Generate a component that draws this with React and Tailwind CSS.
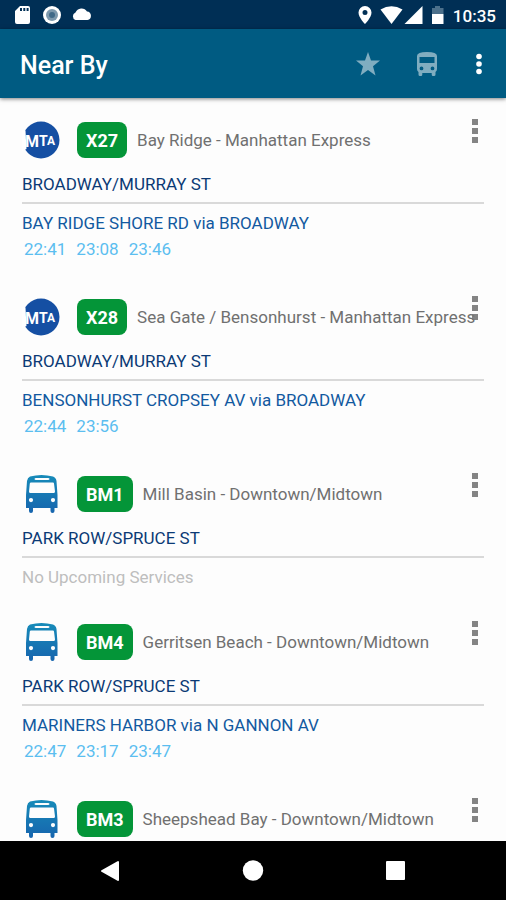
import React from "react";

const services = [
  { route: "X27", name: "Bay Ridge - Manhattan Express", stop: "BROADWAY/MURRAY ST", direction: "BAY RIDGE SHORE RD via BROADWAY", times: ["22:41", "23:08", "23:46"], logo: "mta" },
  { route: "X28", name: "Sea Gate / Bensonhurst - Manhattan Express", stop: "BROADWAY/MURRAY ST", direction: "BENSONHURST CROPSEY AV via BROADWAY", times: ["22:44", "23:56"], logo: "mta" },
  { route: "BM1", name: "Mill Basin - Downtown/Midtown", stop: "PARK ROW/SPRUCE ST", times: [], logo: "bus" },
  { route: "BM4", name: "Gerritsen Beach - Downtown/Midtown", stop: "PARK ROW/SPRUCE ST", direction: "MARINERS HARBOR via N GANNON AV", times: ["22:47", "23:17", "23:47"], logo: "bus" },
  { route: "BM3", name: "Sheepshead Bay - Downtown/Midtown", logo: "bus" },
];

function MtaLogo() {
  return (
    <svg width="40" height="40" viewBox="0 0 40 40" role="img" aria-label="MTA">
      <circle cx="19" cy="20" r="18.5" fill="#154fa3" />
      <path d="M0 10L3.500 10.500L4.500 29L0 31Z" fill="#fff" />
      <g fill="#fff" fontWeight="700" className="font-[Roboto,sans-serif]">
        <text x="3" y="27" fontSize="16">M</text>
        <text x="17" y="26" fontSize="14">T</text>
        <text x="25" y="25" fontSize="12">A</text>
      </g>
    </svg>
  );
}

function BusLogo() {
  return (
    <svg width="40" height="40" viewBox="0 0 40 40" aria-hidden="true">
      <defs>
        <linearGradient id="busPaint" x1="0" y1="0" x2="0" y2="1">
          <stop offset="0" stopColor="#178bb9" />
          <stop offset="1" stopColor="#1765ae" />
        </linearGradient>
      </defs>
      <path fill="url(#busPaint)" fillRule="evenodd" d="M8 2.500Q19.500 -.5 31 2.500Q34 3.500 34.500 7L35.500 21V34H32.500V37Q32.500 39 30.500 39T28.500 37V34H11V37Q11 39 9 39T7 37V34H4V21L5 7Q5.500 3.500 8 2.500ZM14 4Q12.500 4 12.500 5T14 6H26Q27.500 6 27.500 5T26 4ZM9 8.500Q8 8.500 7.800 9.500L7 17.500Q7 19 8.500 19H31.500Q33 19 33 17.500L32 9.500Q31.800 8.500 31 8.500ZM9 24A2.100 2.100 0 1 0 9 28.200A2.100 2.100 0 1 0 9 24ZM31 24A2.100 2.100 0 1 0 31 28.200A2.100 2.100 0 1 0 31 24Z" />
    </svg>
  );
}

function StatusBar() {
  return (
    <div className="flex h-[29px] shrink-0 items-center justify-between bg-[#002f55] pr-2.5 pl-3.5 text-white">
      <svg width="80" height="20" viewBox="0 0 80 20" aria-hidden="true">
        <path fill="#fff" fillRule="evenodd" d="M6 1H14Q16 1 16 3V17Q16 19 14 19H3Q1 19 1 17V6ZM6 3V6H8V3ZM9.300 3V6H11.300V3ZM12.600 3V6H14.600V3Z" />
        <circle cx="38" cy="10" r="9" fill="#fff" />
        <circle cx="38" cy="10" r="6" fill="#7d99ad" />
        <circle cx="38" cy="10" r="3" fill="#416a88" />
        <path fill="#fff" d="M61.500 15A4 4 0 0 1 61.500 7.500A6.500 6.500 0 0 1 73 6.500A4.300 4.300 0 0 1 73.500 15Z" />
      </svg>
      <div className="flex items-center gap-2">
        <svg width="88" height="20" viewBox="0 0 88 20" aria-hidden="true" fill="#fff">
          <path fillRule="evenodd" d="M8 1A6.500 6.500 0 0 0 1.500 7.500C1.500 12.500 8 19 8 19S14.500 12.500 14.500 7.500A6.500 6.500 0 0 0 8 1ZM8 5A2.500 2.500 0 1 1 8 10A2.500 2.500 0 1 1 8 5Z" />
          <path d="M23.500 4.500Q34.500 -2 45.500 4.500L34.500 19Z" />
          <path d="M65.500 1V19H47.500Z" />
          <path fill="#4c708b" d="M75 3H78V1H83V3H86.500V9H75Z" />
          <path d="M75 9H86.500V19H75Z" />
        </svg>
        <span className="pt-0.5 text-[17px] leading-6 font-medium">10:35</span>
      </div>
    </div>
  );
}

function AppBar() {
  return (
    <header className="z-10 flex h-[69px] shrink-0 items-center bg-[#005b82] pr-[15px] pl-5 text-white shadow-[0_1px_4px_rgba(0,0,0,0.5)]">
      <h1 className="flex-1 pt-1 text-[25px] leading-8 font-medium">Near By</h1>
      <button type="button" aria-label="Favourites" className="mr-8">
        <svg width="26" height="26" viewBox="0 0 26 26" fill="#80adc0"><path d="M13 1L16 9.500H25L18 15.300L20.500 24.500L13 19L5.500 24.500L8 15.300L1 9.500H10Z" /></svg>
      </button>
      <button type="button" aria-label="Nearby buses" className="mr-[26px]">
        <svg width="28" height="26" viewBox="0 0 28 26" fill="#80adc0">
          <path fillRule="evenodd" d="M4 5Q4 1 14 1T24 5V18Q24 20 22.500 21V23.500Q22.500 25 21 25H20Q18.700 25 18.700 23.500V22H9.300V23.500Q9.300 25 8 25H7Q5.500 25 5.500 23.500V21Q4 20 4 18ZM6.500 6V12H21.500V6ZM8.500 15.500A1.900 1.900 0 1 0 8.500 19.300A1.900 1.900 0 1 0 8.500 15.500ZM19.500 15.500A1.900 1.900 0 1 0 19.500 19.300A1.900 1.900 0 1 0 19.500 15.500Z" />
        </svg>
      </button>
      <button type="button" aria-label="More options" className="flex w-6 justify-center">
        <svg width="8" height="24" viewBox="0 0 8 24" fill="#fff"><circle cx="4" cy="4.500" r="2.800" /><circle cx="4" cy="12" r="2.800" /><circle cx="4" cy="19.500" r="2.800" /></svg>
      </button>
    </header>
  );
}

function Service({ item }) {
  return (
    <li className="relative mb-[34px]">
      <div className="flex h-9 items-center">
        <span className="w-[55px] shrink-0">{item.logo === "mta" ? <MtaLogo /> : <BusLogo />}</span>
        <span className="flex h-9 shrink-0 items-center rounded-lg bg-[#049538] px-[9px] text-[18px] font-bold text-white">{item.route}</span>
        <span className="ml-2.5 text-[17px] leading-6 whitespace-nowrap text-[#707070]">{item.name}</span>
      </div>
      <button type="button" aria-label={"Options for " + item.route} className="absolute -top-[3px] right-1 flex w-2.5 flex-col items-center gap-[3px] opacity-90">
        <span className="size-1.5 bg-[#777777]" />
        <span className="size-1.5 bg-[#777777]" />
        <span className="size-1.5 bg-[#777777]" />
      </button>
      {item.stop && <h2 className="mt-3.5 border-b-2 border-[#d9d9d9] pb-1.5 text-[17px] leading-6 text-[#0b3a75]">{item.stop}</h2>}
      {item.direction && (
        <>
          <p className="mt-1.5 text-[17px] leading-[26px] text-[#1259a0]">{item.direction}</p>
          <p className="flex h-[29px] gap-2.5 pt-px pl-0.5 text-[17px] leading-6 text-[#5bbef0]">
            {item.times.map((t) => <time key={t}>{t}</time>)}
          </p>
        </>
      )}
      {item.stop && !item.direction && (
        <p className="mt-1.5 text-[17px] leading-[26px] text-[#bebebe]">No Upcoming Services</p>
      )}
    </li>
  );
}

export default function App() {
  return (
    <div className="flex h-screen flex-col bg-[#fdfdfd] font-[Roboto,'Noto_Sans',sans-serif]">
      <StatusBar />
      <AppBar />
      <main className="min-h-0 flex-1 overflow-hidden px-[22px] pt-6">
        <ul>{services.map((s) => <Service key={s.route} item={s} />)}</ul>
      </main>
      <nav aria-label="System" className="flex h-[59px] shrink-0 items-center justify-center gap-[118px] bg-black">
        <button type="button" aria-label="Back"><svg width="24" height="24" viewBox="0 0 24 24"><path d="M19 3V21L3 12Z" fill="#fff" stroke="#fff" strokeWidth="2" strokeLinejoin="round" /></svg></button>
        <button type="button" aria-label="Home"><svg width="24" height="24" viewBox="0 0 24 24"><circle cx="12" cy="11.500" r="10.200" fill="#fff" /></svg></button>
        <button type="button" aria-label="Recent apps"><svg width="24" height="24" viewBox="0 0 24 24"><rect x="3" y="2" width="19" height="19" rx="1" fill="#fff" /></svg></button>
      </nav>
    </div>
  );
}
